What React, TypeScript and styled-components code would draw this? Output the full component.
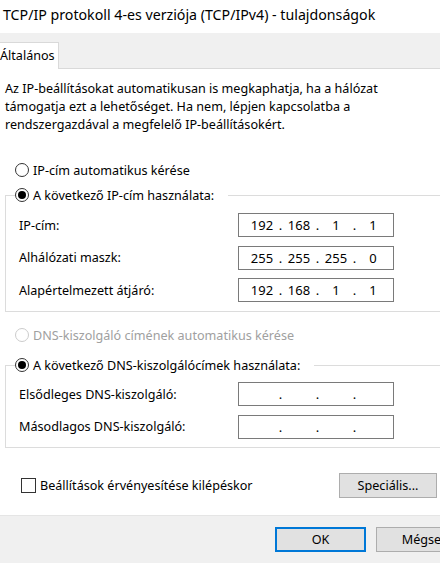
import { Fragment } from "react";
import styled, { createGlobalStyle } from "styled-components";

const GlobalStyle = createGlobalStyle`
  html, body {
    margin: 0;
    padding: 0;
    background: #ffffff;
  }
  body {
    width: 440px;
    height: 563px;
    overflow: hidden;
    font-family: "Noto Sans", "Open Sans", sans-serif;
    font-size: 12.6px;
    color: #000;
  }
`;

const ipFields = [
  { label: "IP-cím:", value: ["192", "168", "1", "1"] },
  { label: "Alhálózati maszk:", value: ["255", "255", "255", "0"] },
  { label: "Alapértelmezett átjáró:", value: ["192", "168", "1", "1"] },
];

const dnsFields = [
  { label: "Elsődleges DNS-kiszolgáló:", value: ["", "", "", ""] },
  { label: "Másodlagos DNS-kiszolgáló:", value: ["", "", "", ""] },
];

function IpBox({ value }: { value: string[] }) {
  return (
    <IpField>
      {value.map((v, i) => (
        <Fragment key={i}>
          {i > 0 && <Dot>.</Dot>}
          <Octet>{v}</Octet>
        </Fragment>
      ))}
    </IpField>
  );
}

function Radio({
  checked,
  disabled,
  children,
}: {
  checked?: boolean;
  disabled?: boolean;
  children: React.ReactNode;
}) {
  return (
    <RadioRow $disabled={disabled}>
      <RadioMark $checked={checked} $disabled={disabled} />
      {children}
    </RadioRow>
  );
}

export default function App() {
  return (
    <>
      <GlobalStyle />
      <Window>
        <Title>TCP/IP protokoll 4-es verziója (TCP/IPv4) - tulajdonságok</Title>

        <TabStrip>
          <Tab>Általános</Tab>
        </TabStrip>

        <Body>
          <Intro>
            Az IP-beállításokat automatikusan is megkaphatja, ha a hálózat
            <br />
            támogatja ezt a lehetőséget. Ha nem, lépjen kapcsolatba a
            <br />
            rendszergazdával a megfelelő IP-beállításokért.
          </Intro>

          <AutoRow $top={26}>
            <Radio>IP-cím automatikus kérése</Radio>
          </AutoRow>

          <Group $top={5} $padTop={8} $padBottom={9}>
            <Legend>
              <Radio checked>A következő IP-cím használata:</Radio>
            </Legend>
            <Fields>
              {ipFields.map((f) => (
                <Field key={f.label}>
                  <span>{f.label}</span>
                  <IpBox value={f.value} />
                </Field>
              ))}
            </Fields>
          </Group>

          <AutoRow $top={13}>
            <Radio disabled>DNS-kiszolgáló címének automatikus kérése</Radio>
          </AutoRow>

          <Group $top={10} $padTop={7} $padBottom={8}>
            <Legend>
              <Radio checked>A következő DNS-kiszolgálócímek használata:</Radio>
            </Legend>
            <Fields>
              {dnsFields.map((f) => (
                <Field key={f.label}>
                  <span>{f.label}</span>
                  <IpBox value={f.value} />
                </Field>
              ))}
            </Fields>
          </Group>

          <OptionsRow>
            <Check>
              <CheckMark />
              Beállítások érvényesítése kilépéskor
            </Check>
            <Button $width={98}>Speciális...</Button>
          </OptionsRow>
        </Body>

        <Footer>
          <Button $width={91} $primary>
            OK
          </Button>
          <Button $width={91}>Mégse</Button>
        </Footer>
      </Window>
    </>
  );
}

const Window = styled.div`
  display: flex;
  flex-direction: column;
  width: 440px;
  height: 563px;
  overflow: hidden;
`;

const Title = styled.div`
  height: 33px;
  box-sizing: border-box;
  padding: 3px 0 0 3px;
  font-size: 14.2px;
  line-height: 24px;
  white-space: nowrap;
`;

const TabStrip = styled.div`
  display: flex;
  align-items: flex-end;
  height: 35px;
  background: #f0f0f0;
  border-bottom: 1px solid #d9d9d9;
`;

const Tab = styled.div`
  box-sizing: border-box;
  width: 66px;
  height: 27px;
  margin: 0 0 -1px -7px;
  padding-left: 6px;
  background: #fff;
  border: 1px solid #d9d9d9;
  border-bottom: none;
  line-height: 26px;
  white-space: nowrap;
`;

const Body = styled.div`
  display: flex;
  flex-direction: column;
  padding-left: 5px;
`;

const Intro = styled.p`
  margin: 11px 0 0;
  line-height: 18px;
  white-space: nowrap;
`;

const AutoRow = styled.div<{ $top: number }>`
  margin-top: ${(p) => p.$top}px;
  padding-left: 10px;
`;

const RadioRow = styled.label<{ $disabled?: boolean }>`
  display: flex;
  align-items: center;
  gap: 4px;
  height: 20px;
  white-space: nowrap;
  color: ${(p) => (p.$disabled ? "#a0a0a0" : "#000")};
`;

const RadioMark = styled.span<{ $checked?: boolean; $disabled?: boolean }>`
  box-sizing: border-box;
  width: 14px;
  height: 14px;
  border-radius: 50%;
  border: 1px solid ${(p) => (p.$disabled ? "#cccccc" : "#333333")};
  background: #fff;
  display: flex;
  align-items: center;
  justify-content: center;

  &::after {
    content: "";
    display: ${(p) => (p.$checked ? "block" : "none")};
    width: 8px;
    height: 8px;
    border-radius: 50%;
    background: #000;
  }
`;

const Group = styled.fieldset<{ $top: number; $padTop: number; $padBottom: number }>`
  margin: ${(p) => p.$top}px -20px 0 0;
  padding: ${(p) => `${p.$padTop}px 0 ${p.$padBottom}px 13px`};
  border: 1px solid #dcdcdc;
  min-width: 0;
`;

const Legend = styled.legend`
  margin-left: -4px;
  padding: 0 14px 0 0;
`;

const Fields = styled.div`
  display: flex;
  flex-direction: column;
  gap: 8.5px;
`;

const Field = styled.div`
  display: grid;
  grid-template-columns: 219px 156px;
  align-items: center;
  height: 24px;
  white-space: nowrap;
`;

const IpField = styled.div`
  box-sizing: border-box;
  display: flex;
  align-items: center;
  height: 24px;
  padding-left: 8px;
  border: 1px solid #7a7a7a;
  background: #fff;
  font-size: 13px;
`;

const Octet = styled.span`
  width: 30px;
  text-align: center;
`;

const Dot = styled.span`
  width: 7px;
  text-align: center;
`;

const OptionsRow = styled.div`
  display: flex;
  align-items: center;
  justify-content: space-between;
  margin: 25px 3px 0 16px;
`;

const Check = styled.label`
  display: flex;
  align-items: center;
  gap: 4px;
  white-space: nowrap;
`;

const CheckMark = styled.span`
  box-sizing: border-box;
  width: 15px;
  height: 15px;
  border: 1px solid #333;
  background: #fff;
`;

const Button = styled.button<{ $width: number; $primary?: boolean }>`
  box-sizing: border-box;
  flex: none;
  width: ${(p) => p.$width}px;
  height: 25px;
  padding: 0;
  font: inherit;
  color: #000;
  background: #e1e1e1;
  border: ${(p) => (p.$primary ? "2px solid #0078d7" : "1px solid #adadad")};
`;

const Footer = styled.div`
  display: flex;
  justify-content: flex-start;
  gap: 10px;
  height: 48px;
  margin-top: auto;
  box-sizing: border-box;
  padding: 11px 0 0 275px;
  background: #f0f0f0;
  border-top: 1px solid #e5e5e5;
`;
